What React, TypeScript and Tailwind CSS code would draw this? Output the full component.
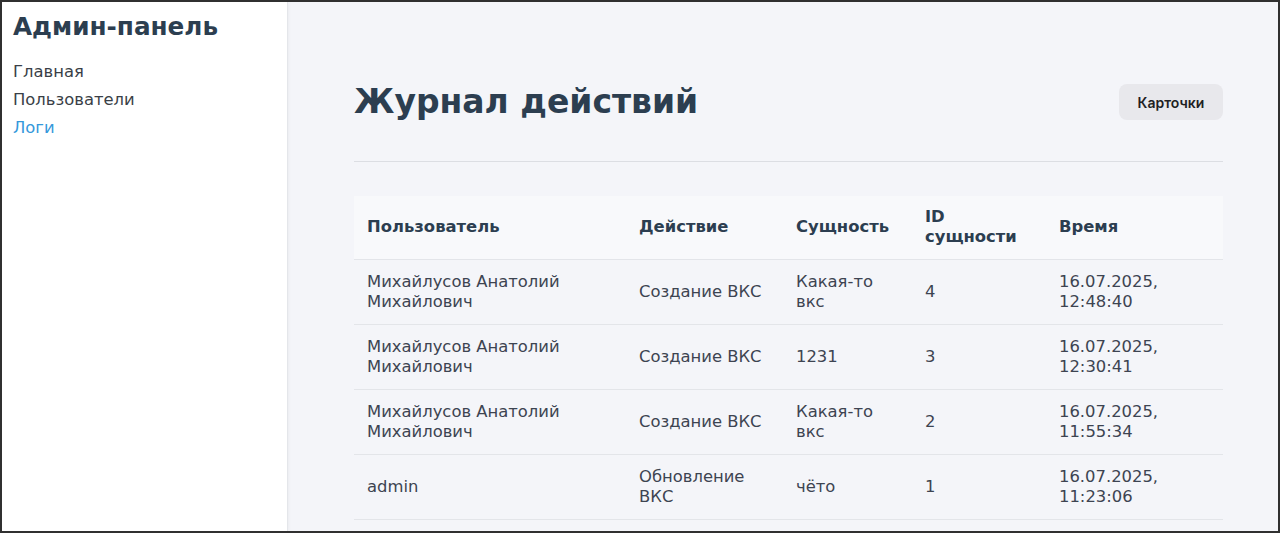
import React from "react";

const ROWS = [
  { user: "Михайлусов Анатолий Михайлович", action: "Создание ВКС", entity: "Какая-то вкс", id: 4, time: "16.07.2025, 12:48:40" },
  { user: "Михайлусов Анатолий Михайлович", action: "Создание ВКС", entity: "1231", id: 3, time: "16.07.2025, 12:30:41" },
  { user: "Михайлусов Анатолий Михайлович", action: "Создание ВКС", entity: "Какая-то вкс", id: 2, time: "16.07.2025, 11:55:34" },
  { user: "admin", action: "Обновление ВКС", entity: "чёто", id: 1, time: "16.07.2025, 11:23:06" },
];

const font = { fontFamily: '"DejaVu Sans", sans-serif' };

export default function App() {
  return (
    <div
      className="flex h-[533px] w-[1280px] overflow-hidden border-2 border-[#303030] bg-[#f4f5f9] text-[#2c3e50]"
      style={font}
    >
      <aside className="w-[286px] shrink-0 border-r border-[#e4e6ea] bg-white px-[11px] pt-[9px] shadow-[1px_0_3px_rgba(0,0,0,0.04)]">
        <h2 className="mb-[15px] text-[24.7px] font-bold leading-[32px] text-[#2c3e50]">Админ-панель</h2>
        <nav className="flex flex-col text-[16.4px] leading-[28px]">
          <a className="text-[#3a3f47]">Главная</a>
          <a className="text-[#3a3f47]">Пользователи</a>
          <a className="text-[#3498db]">Логи</a>
        </nav>
      </aside>

      <main className="flex-1 pl-[66px] pr-[55px] pt-[79px]">
        <div className="flex items-center justify-between pb-[38px]">
          <h1 className="text-[33px] font-bold leading-[42px] text-[#2c3e50]">Журнал действий</h1>
          <button
            className="h-[36px] w-[104px] rounded-[8px] bg-[#e8e8ec] text-[14px] font-semibold text-[#1f1f24]"
            style={{ fontFamily: 'Inter, "Liberation Sans", sans-serif' }}
          >
            Карточки
          </button>
        </div>
        <div className="h-px bg-[#dcdee3]" />

        <table className="mt-[34px] w-full table-fixed border-collapse text-left text-[16.4px] leading-[20px]">
          <colgroup>
            <col className="w-[272px]" />
            <col className="w-[157px]" />
            <col className="w-[129px]" />
            <col className="w-[134px]" />
            <col />
          </colgroup>
          <thead>
            <tr className="h-[63px] border-b border-[#e3e5e9] bg-[#f8f9fb]">
              <th className="px-[13px] font-bold text-[#2c3e50]">Пользователь</th>
              <th className="px-[13px] font-bold text-[#2c3e50]">Действие</th>
              <th className="px-[13px] font-bold text-[#2c3e50]">Сущность</th>
              <th className="px-[13px] pr-[20px] font-bold text-[#2c3e50]">ID сущности</th>
              <th className="px-[13px] font-bold text-[#2c3e50]">Время</th>
            </tr>
          </thead>
          <tbody className="text-[#3d4451]">
            {ROWS.map((r) => (
              <tr key={r.id} className="h-[65px] border-b border-[#e3e5e9]">
                <td className="px-[13px] pr-[40px]">{r.user}</td>
                <td className="px-[13px]">{r.action}</td>
                <td className="px-[13px] pr-[30px]">{r.entity}</td>
                <td className="px-[13px]">{r.id}</td>
                <td className="px-[13px] pr-[50px]">{r.time}</td>
              </tr>
            ))}
          </tbody>
        </table>
      </main>
    </div>
  );
}
